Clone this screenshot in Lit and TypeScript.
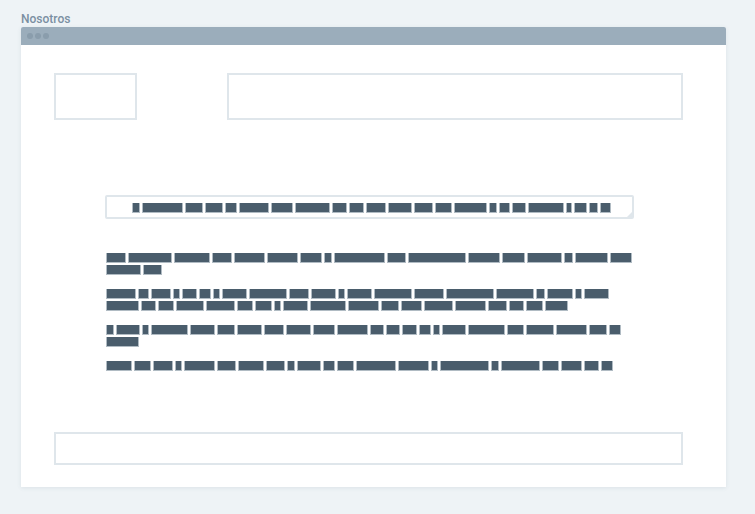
import { LitElement, html, css } from "lit";
import { customElement, property } from "lit/decorators.js";
import { styleMap } from "lit/directives/style-map.js";

// Word lengths, in pixels, of the placeholder copy.
const HEADLINE = [8, 41, 18, 18, 12, 30, 22, 35, 15, 15, 20, 24, 19, 17, 33, 8, 11, 14, 36, 6, 13, 9, 11];

const PARAGRAPHS = [
  [20, 44, 36, 20, 31, 31, 22, 8, 51, 19, 58, 32, 23, 35, 9, 33, 22, 35, 19],
  [
    30, 11, 20, 7, 15, 12, 7, 25, 38, 20, 25, 7, 25, 38, 30, 48, 38, 9, 26, 7, 25,
    33, 15, 16, 28, 29, 16, 17, 7, 25, 36, 31, 18, 21, 29, 31, 19, 15, 17, 23,
  ],
  [8, 24, 7, 37, 25, 18, 25, 20, 25, 22, 31, 14, 14, 15, 12, 7, 24, 37, 17, 28, 31, 18, 12, 33],
  [26, 17, 20, 7, 31, 19, 26, 19, 8, 24, 12, 17, 40, 31, 7, 49, 8, 39, 17, 21, 15, 12],
];

@customElement("word-blocks")
class WordBlocks extends LitElement {
  @property({ attribute: false }) words: number[] = [];

  static styles = css`
    :host {
      display: flex;
      flex-wrap: wrap;
      gap: 2px;
    }
    .word {
      box-sizing: border-box;
      height: 10px;
      background: #4a5d6c;
      border: solid #b0bbc3;
      border-width: 0 1px 1px;
    }
  `;

  render() {
    return this.words.map(
      (w) => html`<span class="word" style=${styleMap({ width: `${w}px` })}></span>`
    );
  }
}

@customElement("app-root")
class AppRoot extends LitElement {
  static styles = css`
    :host {
      display: block;
      box-sizing: border-box;
      min-height: 100vh;
      padding: 11px 29px 27px 21px;
      background: #eef3f6;
      font-family: Roboto, "Liberation Sans", sans-serif;
    }
    .title {
      margin: 0;
      font-size: 12px;
      line-height: 16px;
      font-weight: 500;
      color: #7a8fa2;
    }
    .window {
      background: #fff;
      border-radius: 2px 2px 0 0;
      box-shadow: 0 1px 4px rgba(60, 90, 110, 0.1);
      overflow: hidden;
    }
    .bar {
      display: flex;
      align-items: center;
      gap: 2px;
      height: 18px;
      padding-left: 6px;
      background: #9badbb;
    }
    .dot {
      width: 6px;
      height: 6px;
      border-radius: 50%;
      background: #8a9dac;
    }
    .page {
      padding: 28px 43px 22px 33px;
    }
    .box {
      box-sizing: border-box;
      border: 2px solid #dfe6eb;
    }
    .header {
      display: flex;
      gap: 90px;
    }
    .logo {
      width: 83px;
      height: 47px;
    }
    .nav {
      flex: 1;
    }
    .content {
      margin: 75px 49px 0 51px;
    }
    .field {
      display: grid;
    }
    .field > * {
      grid-area: 1 / 1;
    }
    .input {
      box-sizing: border-box;
      width: 100%;
      height: 24px;
      margin: 0;
      padding: 0 8px;
      border: 2px solid #dfe6eb;
      border-radius: 2px;
      background: #fff;
      resize: none;
      overflow: hidden;
      outline: none;
    }
    .headline {
      align-self: center;
      justify-content: center;
      padding: 2px 0 0 4px;
      pointer-events: none;
    }
    .grip {
      align-self: end;
      justify-self: end;
      margin: 2px;
      pointer-events: none;
    }
    .copy {
      display: flex;
      flex-direction: column;
      gap: 14px;
      padding: 34px 1px 0;
    }
    .footer {
      height: 33px;
      margin-top: 61px;
    }
  `;

  render() {
    return html`
      <h1 class="title">Nosotros</h1>
      <main class="window">
        <div class="bar">
          <span class="dot"></span><span class="dot"></span><span class="dot"></span>
        </div>
        <div class="page">
          <header class="header">
            <div class="box logo"></div>
            <nav class="box nav"></nav>
          </header>
          <section class="content">
            <div class="field">
              <textarea class="input" aria-label="Nosotros" rows="1"></textarea>
              <word-blocks class="headline" .words=${HEADLINE}></word-blocks>
              <svg class="grip" width="5" height="5" viewBox="0 0 5 5" aria-hidden="true">
                <path d="M5 0V5H0Z" fill="#dfe6eb" />
              </svg>
            </div>
            <div class="copy">
              ${PARAGRAPHS.map((p) => html`<word-blocks .words=${p}></word-blocks>`)}
            </div>
          </section>
          <footer class="box footer"></footer>
        </div>
      </main>
    `;
  }
}
